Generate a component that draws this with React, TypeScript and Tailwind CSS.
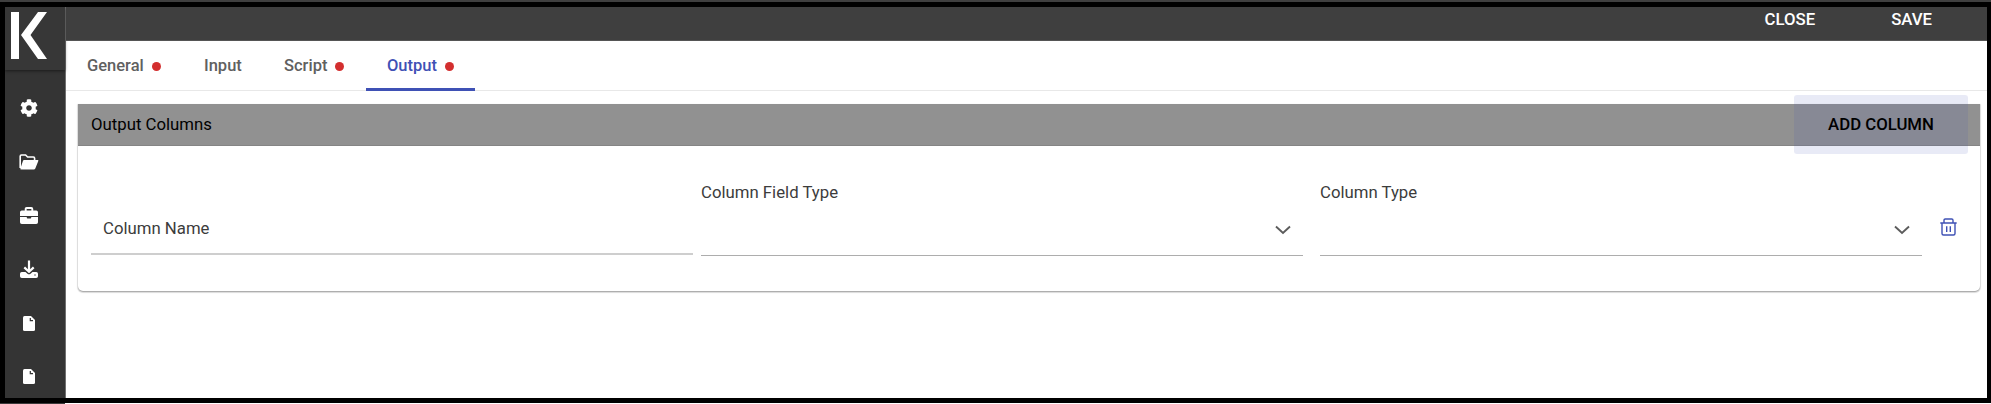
import React from "react";
import { FaCog } from "react-icons/fa";

const tabs = [
  { label: "General", changed: true, width: "w-[117px]" },
  { label: "Input", changed: false, width: "w-[80px]" },
  { label: "Script", changed: true, width: "w-[103px]" },
  { label: "Output", changed: true, width: "w-[109px]" },
];

function Logo() {
  return (
    <svg width="60" height="63" viewBox="0 0 60 63" fill="#fff">
      <path d="M6 5h8v47H6zM33 5h9L25.500 28 42 52h-9L16 28z" />
    </svg>
  );
}

function FolderIcon() {
  return (
    <svg width="20" height="16" viewBox="0 0 20 16">
      <path d="M1.200 14V2.200Q1.200 1 2.400 1h4.200l2 2h5.800q1.200 0 1.200 1.200V6" fill="none" stroke="#fff" strokeWidth="1.600" />
      <path d="M5 6h13.800q.9 0 .5 1l-3 7.500q-.4 1-1.500 1H2.200q-1.200 0-.8-1L4 6.800Q4.300 6 5 6z" fill="#fff" />
    </svg>
  );
}

function BriefcaseIcon() {
  return (
    <svg width="18" height="17" viewBox="0 0 18 17">
      <path d="M5.700 4V2q0-1 1-1h4.600q1 0 1 1v2" fill="none" stroke="#fff" strokeWidth="1.900" />
      <path d="M1.800 3.500h14.400Q18 3.500 18 5.300V9H0V5.300q0-1.800 1.800-1.800zM0 10h6.800v.8q0 .7.7.7h3q.7 0 .7-.7V10H18v5.200q0 1.800-1.800 1.800H1.800Q0 17 0 15.200z" fill="#fff" />
    </svg>
  );
}

function DownloadIcon() {
  return (
    <svg width="18" height="18" viewBox="0 0 18 18">
      <path d="M1.800 12h3.700l2 1.700q1.500 1.300 3 0l2-1.700h3.700q1.800 0 1.800 1.800v2.400q0 1.800-1.800 1.800H1.800Q0 18 0 16.200v-2.400Q0 12 1.800 12z" fill="#fff" />
      <path d="M9 .5v11M4.300 7.400 9 11.800l4.700-4.400" fill="none" stroke="#fff" strokeWidth="2.200" />
      <circle cx="15" cy="15" r=".7" fill="#343434" />
    </svg>
  );
}

function FileIcon() {
  return (
    <svg width="12" height="15" viewBox="0 0 12 15">
      <path d="M1.500 0H8l4 4v9.500q0 1.500-1.500 1.500h-9Q0 15 0 13.500v-12Q0 0 1.500 0z" fill="#fff" />
      <path d="M7.300 2v2.600H10" fill="none" stroke="#343434" strokeWidth="1.200" />
    </svg>
  );
}

function Chevron() {
  return (
    <svg width="16" height="10" viewBox="0 0 16 10" className="mr-[12px] mb-[20px]">
      <path d="m1 1.500 7 6.500 7-6.500" fill="none" stroke="#5c5c5c" strokeWidth="1.900" />
    </svg>
  );
}

function TrashIcon() {
  return (
    <svg width="17" height="18" viewBox="0 0 17 18" fill="none" stroke="#3f51b5" strokeWidth="1.400">
      <path d="M.3 5h16.400M4 4.800V2.300Q4 1 5.300 1h6.400Q13 1 13 2.300v2.500M2 5v10.500Q2 17 3.500 17h10q1.500 0 1.500-1.500V5M6.700 8.200v5.800M10.300 8.200v5.800" />
    </svg>
  );
}

function Select({ label, className }: { label: string; className: string }) {
  return (
    <div className={className}>
      <div className="flex h-[110px] w-[602px] flex-col border-b border-[#adadad] pt-[34px]">
        <span className="leading-6">{label}</span>
        <div className="flex flex-1 items-end justify-end">
          <Chevron />
        </div>
      </div>
    </div>
  );
}

const navIcons = [FaCog, FolderIcon, BriefcaseIcon, DownloadIcon, FileIcon, FileIcon];

export default function App() {
  return (
    <div className="h-[404px] w-[1991px] overflow-hidden bg-[linear-gradient(to_right,#3a3a3a_65px,#fff_65px)] font-['Roboto',sans-serif] text-[16.750px] text-[#3c3c3c]">
      <div className="h-[2px] bg-[#3f3f3f]" />
      <div className="flex h-[401px] border-t-5 border-r-4 border-b-5 border-l-5 border-black bg-white">
        <aside className="flex w-[61px] shrink-0 flex-col border-r border-[#707070] bg-[#343434] text-white">
          <div className="h-[63px] shrink-0 bg-[#373737] shadow-[0_1px_3px_rgba(0,0,0,0.5)]">
            <Logo />
          </div>
          <nav className="flex flex-col pt-[11px] pr-[12px]">
            {navIcons.map((Icon, i) => (
              <div key={i} className="flex h-[53.800px] items-center justify-center text-[18px]">
                <Icon />
              </div>
            ))}
          </nav>
        </aside>
        <main className="min-w-0 flex-1">
          <header className="flex h-[34px] justify-end border-b border-[#555] bg-[#3f3f3f] pr-[55px] font-medium text-white">
            <button className="mr-[76px] h-[26px]">CLOSE</button>
            <button className="h-[26px]">SAVE</button>
          </header>
          <div className="flex h-[50px] border-b border-[#e8e8e8] font-medium text-[#606060]">
            {tabs.map((tab) => (
              <button
                key={tab.label}
                className={`flex h-[50px] shrink-0 items-center gap-[8px] border-b-[3px] pt-[3px] pl-[21px] text-[16.500px] ${tab.width} ${
                  tab.label === "Output" ? "border-[#3f51b5] text-[#3f51b5]" : "border-transparent"
                }`}
              >
                {tab.label}
                {tab.changed && <span className="size-[9px] rounded-full bg-[#d32f2f]" />}
              </button>
            ))}
          </div>
          <section className="mt-[13px] mr-[7px] ml-[12px] h-[187px] rounded-b-[5px] shadow-[0_1px_1px_1px_rgba(0,0,0,0.12),0_1px_1px_rgba(0,0,0,0.25)]">
            <div className="flex h-[42px] items-center justify-between border-b border-[#858585] bg-[#919191] pr-[12px] pl-[13px] text-black">
              <h2 className="pt-px">Output Columns</h2>
              <button className="h-[59px] w-[174px] shrink-0 rounded-[3px] bg-[#3f51b5]/12 pt-px font-medium">ADD COLUMN</button>
            </div>
            <div className="flex pl-[13px]">
              <div className="flex h-[109px] w-[602px] items-end border-b-2 border-[#cecece] pb-[13px] pl-[12px]">
                <span className="leading-6">Column Name</span>
              </div>
              <Select label="Column Field Type" className="ml-[8px]" />
              <Select label="Column Type" className="ml-[17px]" />
              <button className="mt-[72px] ml-[18px] h-[18px]">
                <TrashIcon />
              </button>
            </div>
          </section>
        </main>
      </div>
    </div>
  );
}
